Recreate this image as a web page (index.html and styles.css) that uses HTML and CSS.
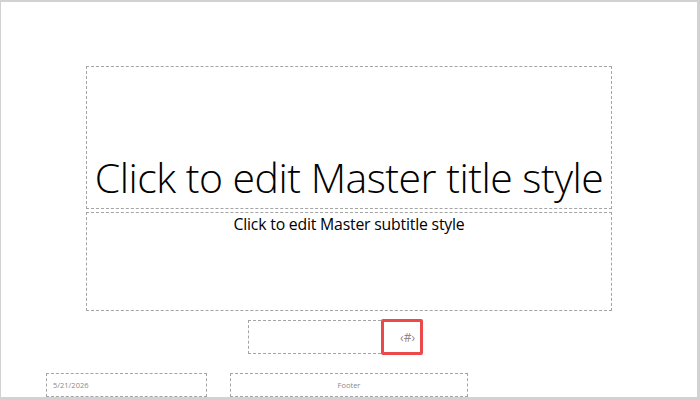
FILE: index.html
```html
<!DOCTYPE html>
<html>
<head>
<meta charset="utf-8">
<link rel="stylesheet" href="styles.css">
</head>
<body>
<div class="slide">
  <div class="ph title-box"><span class="title">Click to edit Master title style</span></div>
  <div class="ph subtitle-box"><span class="subtitle">Click to edit Master subtitle style</span></div>
  <div class="ph num-box"><span class="num">‹#›</span><div class="highlight"></div></div>
  <div class="footer-row">
    <div class="ph date-box"><span class="small">5/21/2026</span></div>
    <div class="ph footer-box"><span class="small">Footer</span></div>
  </div>
</div>
</body>
</html>
```
FILE: styles.css
```css
html, body {
  margin: 0;
  padding: 0;
}
body {
  width: 700px;
  height: 400px;
  background: #d2d2d2;
  overflow: hidden;
  font-family: "Open Sans", "Noto Sans", sans-serif;
}
.slide {
  margin: 2px 0 0 1px;
  width: 696px;
  height: 395px;
  background: #ffffff;
  display: flex;
  flex-direction: column;
  align-items: flex-start;
}
.ph {
  box-sizing: border-box;
  border: 1px dashed #a4a4a4;
}
.title-box {
  margin: 64px 0 0 85px;
  width: 526px;
  height: 143px;
  display: flex;
  align-items: flex-end;
  justify-content: center;
}
.title {
  font-weight: 300;
  font-size: 41px;
  line-height: 41px;
  color: #000;
  white-space: nowrap;
  letter-spacing: -0.5px;
  margin-bottom: 10px;
}
.subtitle-box {
  margin: 3px 0 0 85px;
  width: 526px;
  height: 99px;
  display: flex;
  justify-content: center;
}
.subtitle {
  font-size: 15.8px;
  line-height: 22px;
  color: #000;
  letter-spacing: -0.2px;
}
.num-box {
  position: relative;
  margin: 9px 0 0 247px;
  width: 173px;
  height: 34px;
  display: flex;
  align-items: center;
  justify-content: flex-end;
  padding-right: 5px;
}
.num {
  font-size: 12px;
  color: #8a8a8a;
}
.highlight {
  position: absolute;
  left: 132px;
  top: -2px;
  width: 42px;
  height: 36px;
  box-sizing: border-box;
  border: 3px solid #ec4a4a;
  border-radius: 2px;
}
.footer-row {
  margin: 19px 0 0 45px;
  display: flex;
  gap: 23px;
}
.date-box {
  width: 161px;
  height: 24px;
  display: flex;
  align-items: center;
  padding-left: 6px;
}
.footer-box {
  width: 238px;
  height: 24px;
  display: flex;
  align-items: center;
  justify-content: center;
}
.small {
  font-size: 7.5px;
  color: #8a8a8a;
}
```
